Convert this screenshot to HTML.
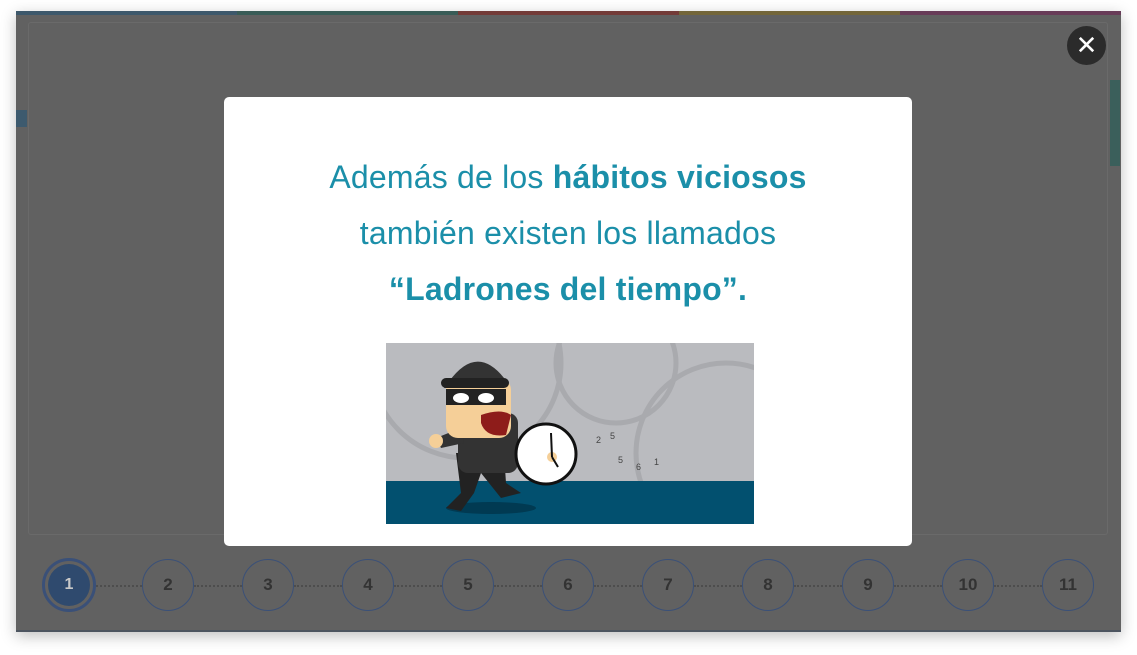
<!DOCTYPE html>
<html><head><meta charset="utf-8"><style>
*{margin:0;padding:0;box-sizing:border-box}
body{width:1137px;height:655px;background:#fff;position:relative;overflow:hidden;font-family:"Liberation Sans",sans-serif}
.card{position:absolute;left:16px;top:11px;width:1105px;height:621px;background:#616161;box-shadow:0 4px 14px rgba(0,0,0,.25)}
.stripe{position:absolute;top:0;height:4px}
.inner{position:absolute;left:12px;top:11px;width:1080px;height:513px;border:1px solid #6a6a6a;border-radius:3px}
.close{position:absolute;left:1067px;top:26px;width:39px;height:39px;border-radius:50%;background:#2b2b2b;color:#fff;font-size:26px;line-height:38px;text-align:center}
.modal{position:absolute;left:224px;top:97px;width:688px;height:449px;background:#fff;border-radius:5px}
.txt{position:absolute;left:0;top:52px;width:688px;text-align:center;color:#1b8fa9;font-size:32px;line-height:56px;letter-spacing:0.2px}
.step{position:absolute;top:559px;width:52px;height:52px;border-radius:50%;border:1.5px solid #3a5078;color:#333;font-weight:bold;font-size:17px;text-align:center;line-height:49px}
.dot{position:absolute;top:585px;height:0;border-top:2px dotted #4d4d4d}
</style></head><body>
<div class="card">
<div class="stripe" style="left:0;width:221px;background:#3d586b"></div>
<div class="stripe" style="left:221px;width:221px;background:#395c57"></div>
<div class="stripe" style="left:442px;width:221px;background:#733b38"></div>
<div class="stripe" style="left:663px;width:221px;background:#73663a"></div>
<div class="stripe" style="left:884px;width:221px;background:#683c58"></div>
<div class="inner"></div>
<div style="position:absolute;left:0;top:99px;width:11px;height:17px;background:#3d5a6e"></div>
<div style="position:absolute;left:1094px;top:69px;width:10px;height:86px;background:#3b5f5b"></div>
<div style="position:absolute;left:0;top:619px;width:1105px;height:2px;background:#4d5560"></div>
</div>
<div class="close">✕</div>
<div class="modal">
<div class="txt">Además de los <b>hábitos viciosos</b><br>también existen los llamados<br><b>“Ladrones del tiempo”.</b></div>
<svg style="position:absolute;left:162px;top:246px" width="368" height="181" viewBox="0 0 368 181">
<rect width="368" height="181" fill="#babbbf"/>
<g fill="none" stroke="#a9aaae" stroke-width="5">
<circle cx="80" cy="20" r="95"/><circle cx="230" cy="20" r="60"/><circle cx="340" cy="110" r="90"/>
</g>
<rect y="138" width="368" height="43" fill="#02506f"/>
<ellipse cx="105" cy="165" rx="45" ry="6" fill="#013a52"/>
<path d="M70 110 L75 150 L60 165 L75 168 L88 150 L95 130 L115 155 L135 150 L120 140 L118 110 Z" fill="#222"/>
<rect x="72" y="70" width="60" height="60" rx="10" fill="#333"/>
<path d="M50 95 L75 85 L78 100 L55 105Z" fill="#333"/><circle cx="50" cy="98" r="7" fill="#f5cf98"/>
<rect x="60" y="35" width="65" height="60" rx="12" fill="#f5cf98"/>
<rect x="60" y="46" width="60" height="16" fill="#222"/>
<ellipse cx="75" cy="55" rx="8" ry="5" fill="#fff"/><ellipse cx="100" cy="55" rx="8" ry="5" fill="#fff"/>
<path d="M62 40 Q90 0 118 35 L118 45 L58 45Z" fill="#333"/>
<rect x="55" y="35" width="68" height="10" rx="5" fill="#222"/>
<path d="M95 72 Q115 65 125 72 L120 92 Q100 95 95 80Z" fill="#8e1c1a"/>
<circle cx="160" cy="111" r="30" fill="#fff" stroke="#111" stroke-width="3"/>
<circle cx="166" cy="114" r="5" fill="#f5cf98"/>
<path d="M166 114 L165 90 M166 114 L172 124" stroke="#111" stroke-width="2"/>
<g fill="#444" font-size="9" font-family="Liberation Sans"><text x="210" y="100">2</text><text x="224" y="96">5</text><text x="232" y="120">5</text><text x="250" y="127">6</text><text x="268" y="122">1</text></g>
</svg>
</div>
<div class="step" style="left:42px;width:54px;height:54px;top:558px;border:3px solid #3a5078;padding:3px"><div style="width:42px;height:42px;border-radius:50%;background:#2f4a6e;color:#c9c9c9;line-height:42px;font-size:16px">1</div></div>
<div class="dot" style="left:96px;width:46px"></div>
<div class="step" style="left:142px">2</div><div class="dot" style="left:194px;width:48px"></div>
<div class="step" style="left:242px">3</div><div class="dot" style="left:294px;width:48px"></div>
<div class="step" style="left:342px">4</div><div class="dot" style="left:394px;width:48px"></div>
<div class="step" style="left:442px">5</div><div class="dot" style="left:494px;width:48px"></div>
<div class="step" style="left:542px">6</div><div class="dot" style="left:594px;width:48px"></div>
<div class="step" style="left:642px">7</div><div class="dot" style="left:694px;width:48px"></div>
<div class="step" style="left:742px">8</div><div class="dot" style="left:794px;width:48px"></div>
<div class="step" style="left:842px">9</div><div class="dot" style="left:894px;width:48px"></div>
<div class="step" style="left:942px">10</div><div class="dot" style="left:994px;width:48px"></div>
<div class="step" style="left:1042px">11</div>
</body></html>
